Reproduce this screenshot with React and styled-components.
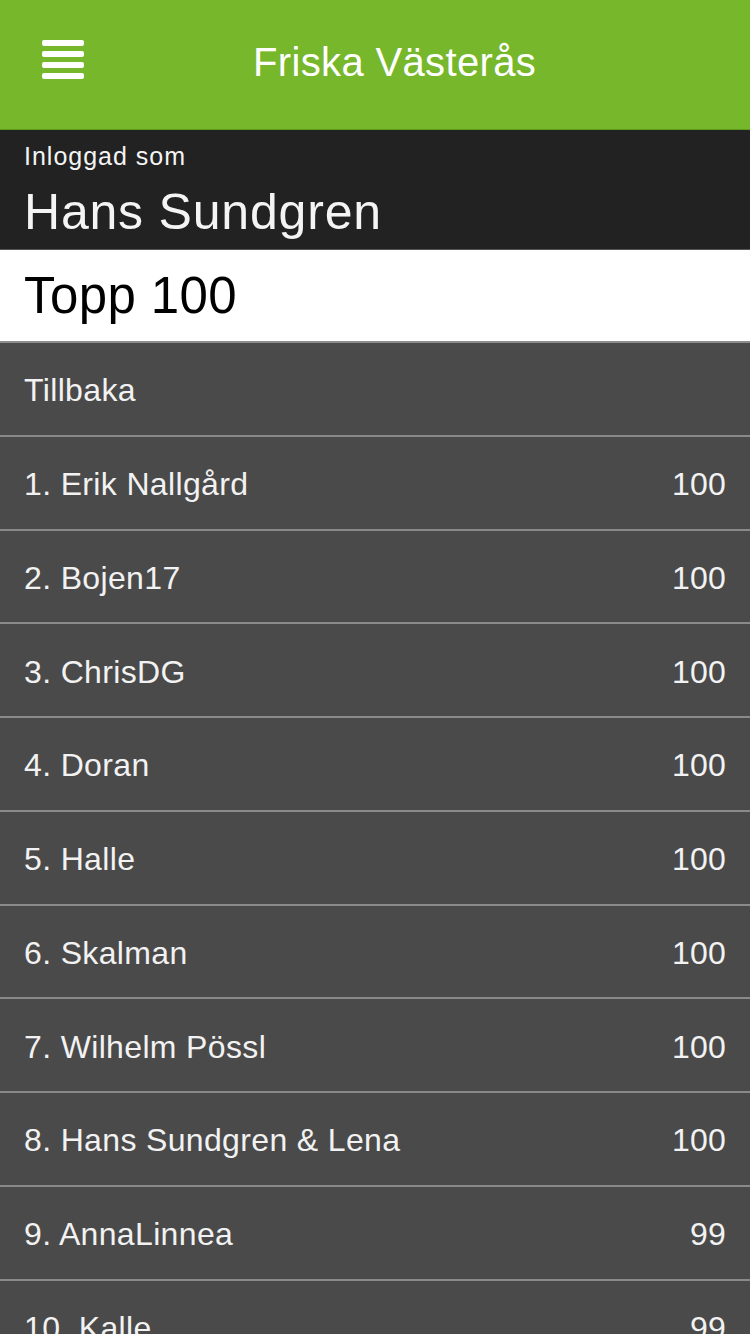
import React from "react";
import styled, { createGlobalStyle } from "styled-components";

const Global = createGlobalStyle`
  html, body { margin: 0; padding: 0; background: #4a4a4a; }
  body { font-family: "Liberation Sans", Arial, sans-serif; -webkit-font-smoothing: antialiased; }
  * { box-sizing: border-box; }
`;

const Page = styled.div`
  width: 750px;
  height: 1334px;
  overflow: hidden;
  display: flex;
  flex-direction: column;
  background: #4a4a4a;
`;

const TopBar = styled.header`
  height: 130px;
  flex: none;
  background: #77b72b;
  border-bottom: 1px solid #5f9a1f;
  display: flex;
  align-items: center;
  padding-left: 42px;
`;

const MenuButton = styled.div`
  width: 42px;
  height: 39px;
  display: flex;
  flex-direction: column;
  justify-content: space-between;
  margin-top: -11px;
`;

const Bar = styled.span`
  display: block;
  height: 6px;
  border-radius: 2px;
  background: #ffffff;
`;

const Title = styled.h1`
  margin: -4px 0 0 169px;
  font-weight: 400;
  font-size: 40px;
  color: #ffffff;
  letter-spacing: 0.35px;
`;

const UserBar = styled.div`
  height: 120px;
  flex: none;
  background: #222222;
  border-bottom: 1px solid #555;
  padding: 12px 24px 0;
  color: #f4f4f4;
`;

const Small = styled.div`
  font-size: 25px;
  line-height: 28px;
  letter-spacing: 1px;
`;

const UserName = styled.div`
  font-size: 50px;
  line-height: 62px;
  margin-top: 11px;
  letter-spacing: 0.8px;
`;

const PageTitle = styled.div`
  height: 93px;
  flex: none;
  background: #ffffff;
  border-bottom: 2px solid #8c8c8c;
  padding: 0 24px;
  display: flex;
  align-items: center;
  font-size: 51px;
  letter-spacing: 0.4px;
  color: #000;
`;

const Row = styled.div`
  height: 93.75px;
  flex: none;
  border-bottom: 2px solid #8a8a8a;
  display: flex;
  align-items: center;
  justify-content: space-between;
  padding: 4px 24px 0 24px;
  color: #f2f2f2;
  font-size: 32px;
  letter-spacing: 0.35px;
`;

const Score = styled.span`
  font-size: 32px;
  letter-spacing: 0.2px;
`;

const players = [
  ["Erik Nallgård", 100],
  ["Bojen17", 100],
  ["ChrisDG", 100],
  ["Doran", 100],
  ["Halle", 100],
  ["Skalman", 100],
  ["Wilhelm Pössl", 100],
  ["Hans Sundgren & Lena", 100],
  ["AnnaLinnea", 99],
  ["Kalle", 99],
];

export default function App() {
  return (
    <Page>
      <Global />
      <TopBar>
        <MenuButton>
          <Bar />
          <Bar />
          <Bar />
          <Bar />
        </MenuButton>
        <Title>Friska Västerås</Title>
      </TopBar>
      <UserBar>
        <Small>Inloggad som</Small>
        <UserName>Hans Sundgren</UserName>
      </UserBar>
      <PageTitle>Topp 100</PageTitle>
      <Row>Tillbaka</Row>
      {players.map(([name, score], i) => (
        <Row key={name}>
          <span>{i + 1}. {name}</span>
          <Score>{score}</Score>
        </Row>
      ))}
    </Page>
  );
}
